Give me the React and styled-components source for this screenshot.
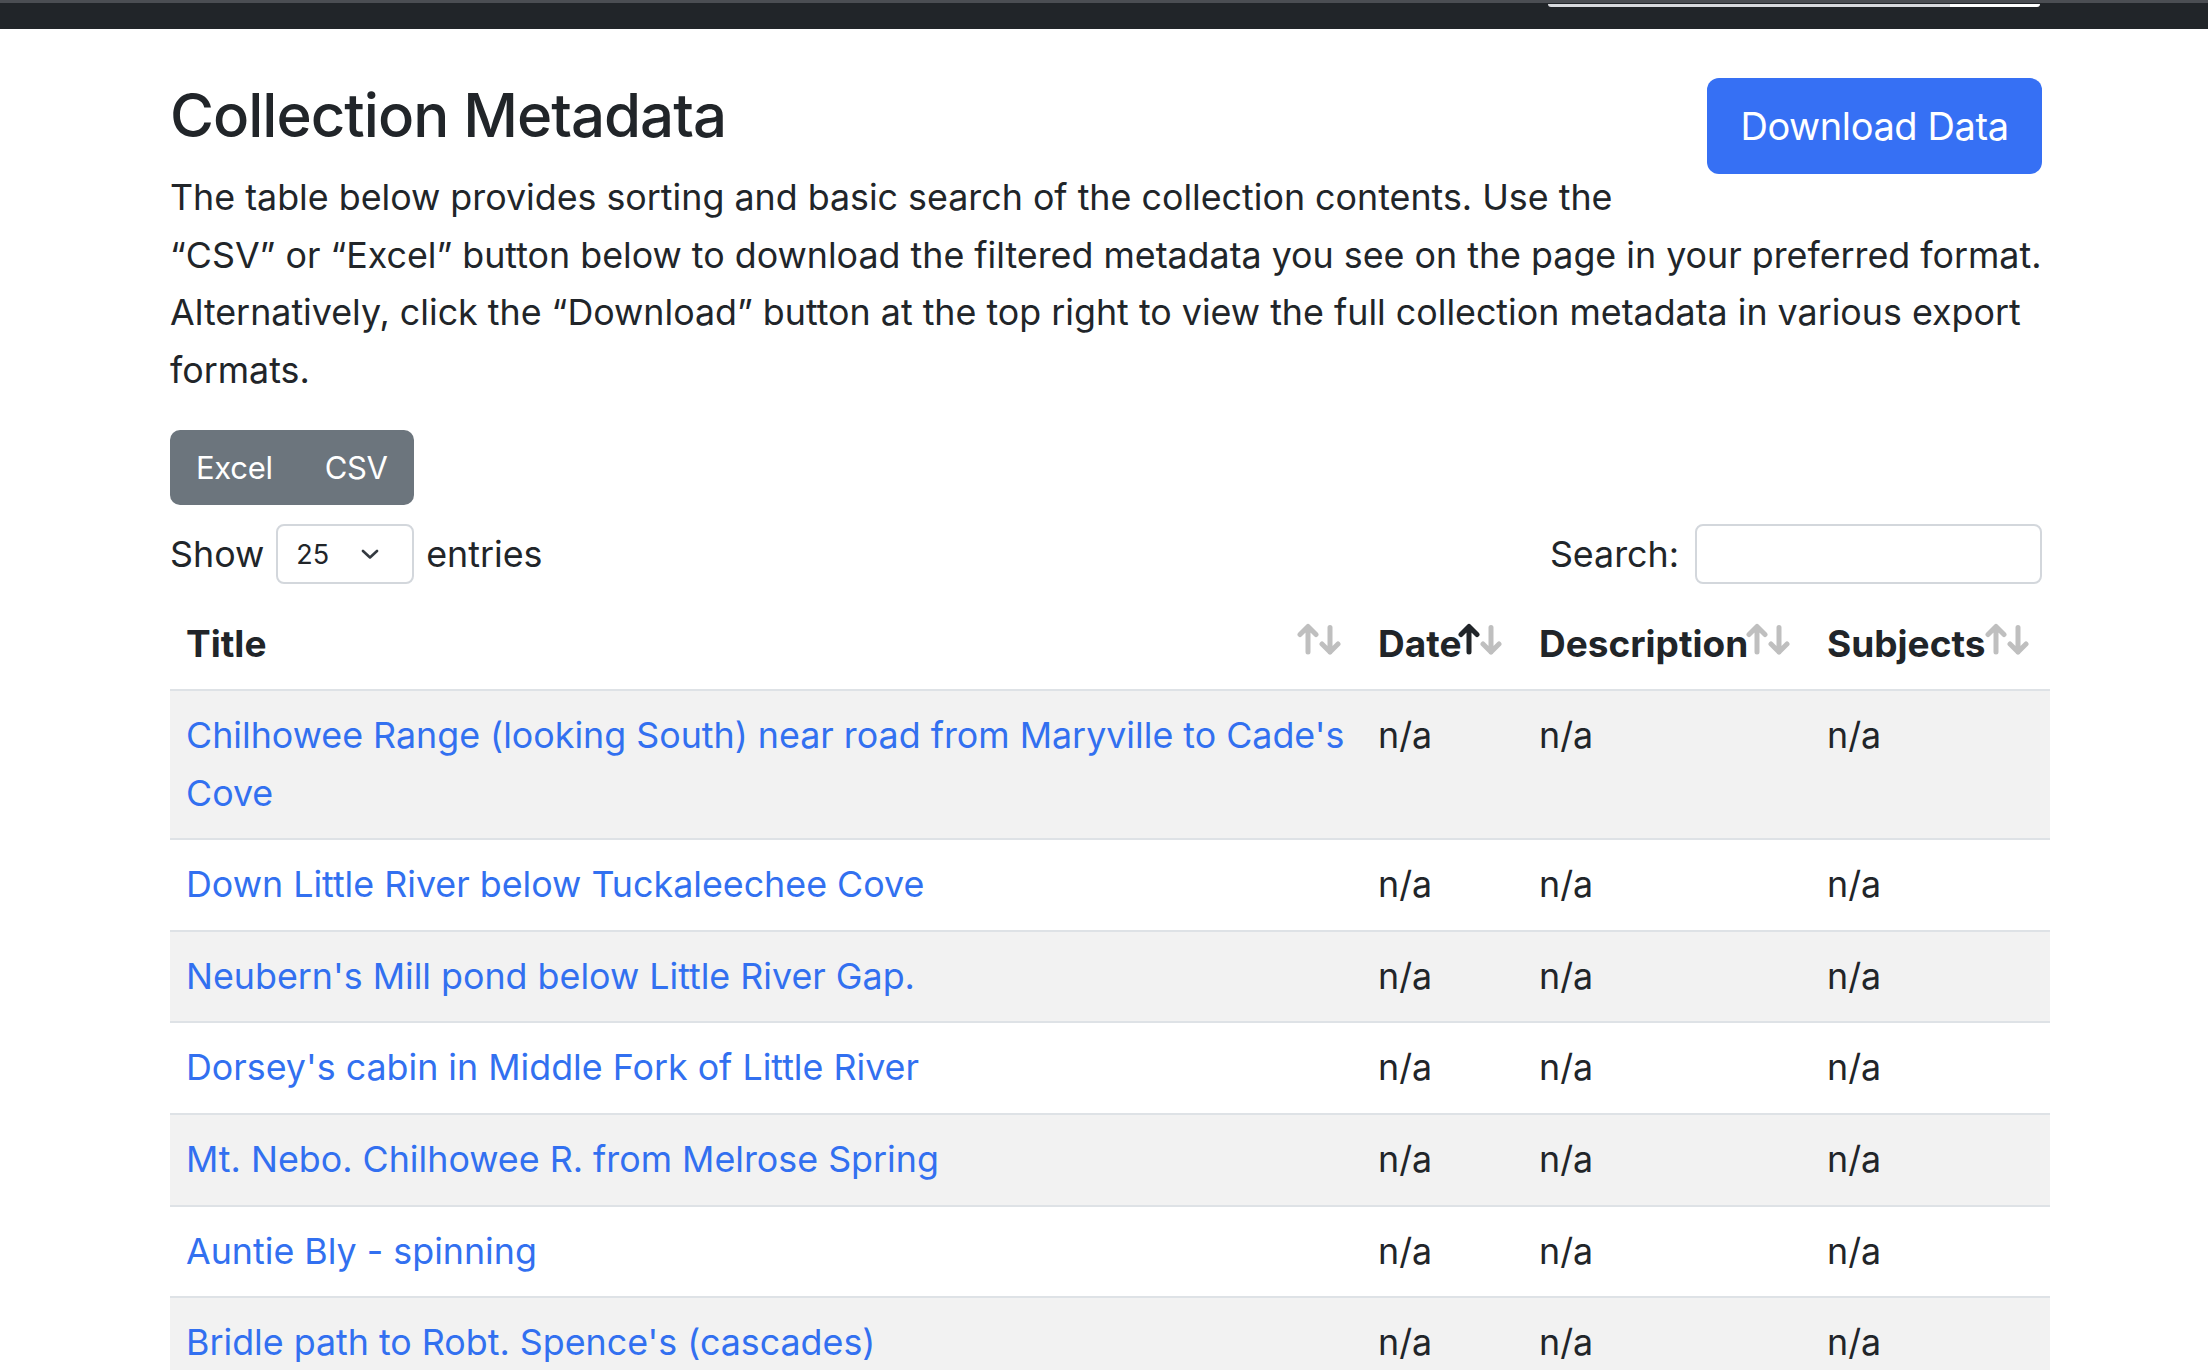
import styled, { createGlobalStyle } from "styled-components";

const GlobalStyle = createGlobalStyle`
  html, body {
    margin: 0;
    padding: 0;
    background: #fff;
  }
  body {
    font-family: Inter, "Liberation Sans", sans-serif;
    font-size: 35.8px;
    line-height: 57.6px;
    color: #212529;
  }
  * {
    box-sizing: border-box;
  }
`;

const rows = [
    "Chilhowee Range (looking South) near road from Maryville to Cade's Cove",
    "Down Little River below Tuckaleechee Cove",
    "Neubern's Mill pond below Little River Gap.",
    "Dorsey's cabin in Middle Fork of Little River",
    "Mt. Nebo. Chilhowee R. from Melrose Spring",
    "Auntie Bly - spinning",
    "Bridle path to Robt. Spence's (cascades)",
];

const columns = [
    { label: "Title", width: 1192, sort: "none" },
    { label: "Date", width: 161, sort: "asc" },
    { label: "Description", width: 288, sort: "none" },
    { label: "Subjects", width: 239, sort: "none" },
];

const SortIcon = ({ sort }) => (
    <SortMark viewBox="0 0 44 32" width="44" height="32">
        <g fill="none" strokeWidth="5" strokeLinecap="round" strokeLinejoin="round">
            <path d="M11 29 V3.5 M3 11.5 L11 3.5 L19 11.5" stroke={sort === "asc" ? "#212529" : "#bfbfbf"} />
            <path d="M33 4.5 V29 M25 21 L33 29 L41 21" stroke={sort === "desc" ? "#212529" : "#bfbfbf"} />
        </g>
    </SortMark>
);

const App = () => {
    return (
        <>
            <GlobalStyle />
            <TopBar>
                <NavSearch>
                    <NavInput />
                    <NavButton />
                </NavSearch>
            </TopBar>
            <Main>
                <Intro>
                    <DownloadButton>Download Data</DownloadButton>
                    <Heading>Collection Metadata</Heading>
                    <Lead>
                        The table below provides sorting and basic search of the collection contents. Use the
                        “CSV” or “Excel” button below to download the filtered metadata you see on the page in your
                        preferred format. Alternatively, click the “Download” button at the top right to view the full
                        collection metadata in various export formats.
                    </Lead>
                </Intro>

                <ButtonGroup>
                    <ExportButton>Excel</ExportButton>
                    <ExportButton>CSV</ExportButton>
                </ButtonGroup>

                <Controls>
                    <Length>
                        Show
                        <Select>
                            <span>25</span>
                            <svg width="18" height="10" viewBox="0 0 18 10">
                                <path d="M2 2 L9 8.5 L16 2" fill="none" stroke="#343a40" strokeWidth="2.6" strokeLinecap="round" strokeLinejoin="round" />
                            </svg>
                        </Select>
                        entries
                    </Length>
                    <Filter>
                        Search:
                        <SearchInput type="search" />
                    </Filter>
                </Controls>

                <Table>
                    <colgroup>
                        {columns.map((c) => (
                            <col key={c.label} style={{ width: c.width }} />
                        ))}
                    </colgroup>
                    <thead>
                        <tr>
                            {columns.map((c) => (
                                <Th key={c.label}>
                                    {c.label}
                                    <SortIcon sort={c.sort} />
                                </Th>
                            ))}
                        </tr>
                    </thead>
                    <tbody>
                        {rows.map((title, i) => (
                            <Row key={title} $striped={i % 2 === 0}>
                                <Td>
                                    <Link href="#">{title}</Link>
                                </Td>
                                <Td>n/a</Td>
                                <Td>n/a</Td>
                                <Td>n/a</Td>
                            </Row>
                        ))}
                    </tbody>
                </Table>
            </Main>
        </>
    );
};

const TopBar = styled.header`
    display: flex;
    justify-content: flex-end;
    height: 29px;
    padding-right: 168px;
    background: #212529;
    border-top: 3px solid #4b4e53;
`;

const NavSearch = styled.div`
    display: flex;
    width: 492px;
    height: 3px;
    margin-top: 1px;
`;

const NavInput = styled.span`
    flex: 1;
    background: #d8dade;
    border-bottom-left-radius: 3px;
`;

const NavButton = styled.span`
    width: 90px;
    background: #fff;
    border-bottom-right-radius: 3px;
`;

const Main = styled.main`
    margin: 0 166px 0 170px;
    padding-top: 48px;
`;

const Intro = styled.section`
    margin-bottom: 31px;
`;

const DownloadButton = styled.button`
    float: right;
    width: 335px;
    height: 96px;
    margin: -1px 0 0 24px;
    padding: 0;
    border: none;
    border-radius: 12px;
    background: #3670f4;
    color: #fff;
    font-family: inherit;
    font-size: 38px;
    letter-spacing: -0.4px;
    line-height: 60px;
`;

const Heading = styled.h2`
    margin: 2px 0 18px;
    font-size: 60px;
    line-height: 72px;
    font-weight: 500;
    letter-spacing: -1px;
`;

const Lead = styled.p`
    margin: 0;
`;

const ButtonGroup = styled.div`
    display: inline-flex;
    border-radius: 10px;
    overflow: hidden;
    background: #6c757d;
`;

const ExportButton = styled.button`
    height: 75px;
    padding: 0 26px;
    border: none;
    background: transparent;
    color: #fff;
    font-family: inherit;
    font-size: 31px;
    letter-spacing: -0.3px;
`;

const Controls = styled.div`
    display: flex;
    justify-content: space-between;
    align-items: center;
    margin-top: 19px;
`;

const Length = styled.label`
    display: flex;
    align-items: center;
    gap: 12px;
`;

const Select = styled.div`
    display: flex;
    align-items: center;
    justify-content: space-between;
    width: 138px;
    height: 60px;
    padding: 0 33px 0 18px;
    border: 2px solid #d3d7dc;
    border-radius: 8px;
    font-size: 27px;
`;

const Filter = styled.label`
    display: flex;
    align-items: center;
    gap: 16px;
`;

const SearchInput = styled.input`
    width: 347px;
    height: 60px;
    border: 2px solid #d3d7dc;
    border-radius: 8px;
    font-family: inherit;
`;

const Table = styled.table`
    width: calc(100% + 8px);
    margin-top: 15px;
    border-collapse: collapse;
    table-layout: fixed;
`;

const Th = styled.th`
    position: relative;
    padding: 16px;
    text-align: left;
    font-size: 37px;
    font-weight: 700;
    border-bottom: 2px solid #dee2e6;
`;

const SortMark = styled.svg`
    position: absolute;
    top: 24px;
    right: 21px;
`;

const Row = styled.tr`
    background: ${(p) => (p.$striped ? "#f2f2f2" : "#fff")};
    border-bottom: 2px solid #dee2e6;
`;

const Td = styled.td`
    padding: 16px;
    vertical-align: top;
`;

const Link = styled.a`
    color: #3270f0;
    text-decoration: none;
`;

export default App;
